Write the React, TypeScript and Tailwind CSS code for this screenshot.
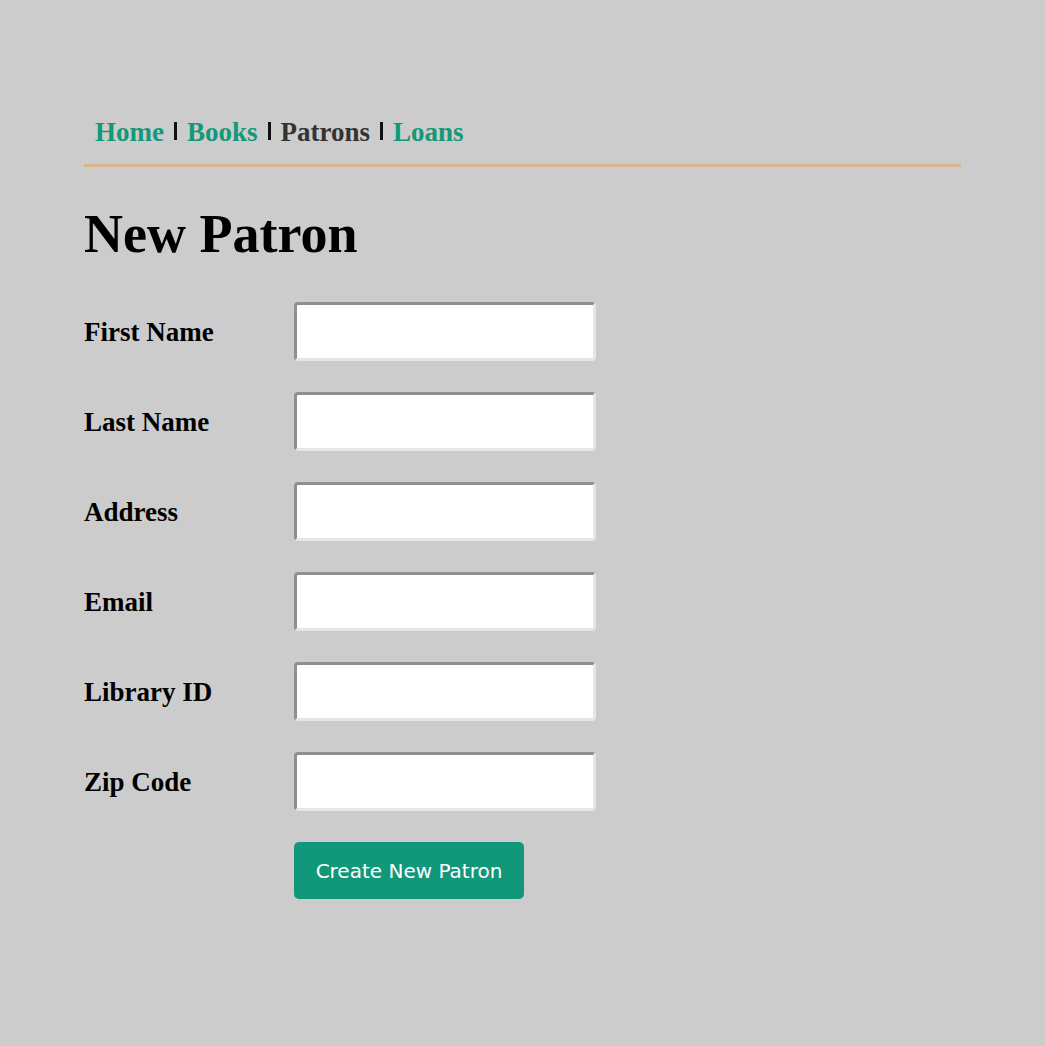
const fields = ["First Name", "Last Name", "Address", "Email", "Library ID", "Zip Code"];

const navLinks = [
  { label: "Home", active: false },
  { label: "Books", active: false },
  { label: "Patrons", active: true },
  { label: "Loans", active: false },
];

export default function App() {
  return (
    <div className="min-h-screen bg-[#cccccc] font-['Liberation_Serif','Times_New_Roman',serif] text-black">
      <div className="mx-auto w-[877px] pt-[117px]">
        <nav className="flex items-start border-b-[3px] border-[#dcb48c] pb-[17px] pl-[11px]">
          {navLinks.map((link, i) => (
            <div key={link.label} className="flex items-start">
              {i > 0 ? <span className="ml-[10px] mr-[10px] mt-[5px] h-[18px] w-[3px] bg-[#111]" /> : null}
              <a
                href="#"
                className={`text-[27px] font-bold leading-[30px] ${link.active ? "text-[#333333]" : "text-[#11997a]"}`}
              >
                {link.label}
              </a>
            </div>
          ))}
        </nav>

        <h1 className="mt-[40px] text-[54px] font-bold leading-[54px]">New Patron</h1>

        <form className="mt-[41px] flex flex-col gap-[31px]" onSubmit={(e) => e.preventDefault()}>
          {fields.map((field) => (
            <div key={field} className="flex items-center">
              <label className="w-[210px] text-[27px] font-bold leading-[30px]">{field}</label>
              <input
                type="text"
                className="h-[59px] w-[302px] rounded-[4px] border-[3px] border-b-[#e6e6e6] border-l-[#8f8f8f] border-r-[#e6e6e6] border-t-[#8f8f8f] bg-white px-2 text-[20px] outline-none"
              />
            </div>
          ))}
          <div className="flex">
            <button
              type="submit"
              className="ml-[210px] h-[57px] w-[230px] rounded-[5px] bg-[#11987a] font-['DejaVu_Sans',sans-serif] text-[20px] text-white"
            >
              Create New Patron
            </button>
          </div>
        </form>
      </div>
    </div>
  );
}
